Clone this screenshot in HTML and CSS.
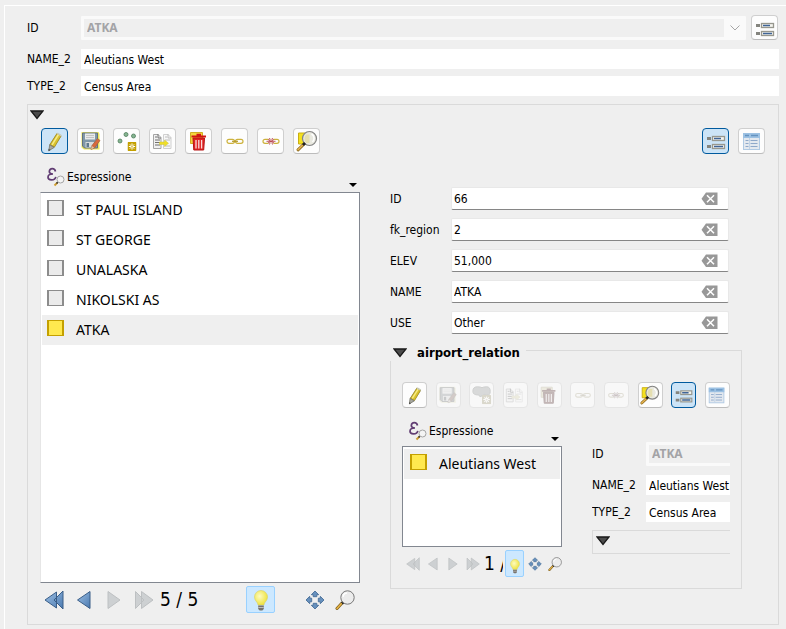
FILE: index.html
```html
<!DOCTYPE html>
<html lang="it">
<head>
<meta charset="utf-8">
<title>Aleutians West</title>
<link rel="stylesheet" href="styles.css">
</head>
<body>
<svg class="defs" aria-hidden="true">
  <defs>
    <linearGradient id="blue" x1="0" y1="0" x2="1" y2="1"><stop offset="0" stop-color="#9dc0e4"/><stop offset="1" stop-color="#4a79b0"/></linearGradient>
    <radialGradient id="glow" cx=".4" cy=".4" r=".7"><stop offset="0" stop-color="#fdfbc0"/><stop offset="1" stop-color="#ecdf2c"/></radialGradient>
  </defs>
  <symbol id="edit" viewBox="0 0 24 24">
    <path d="M5.500 22l1-6.500L14 4l4.600 2.800-7.500 12z" fill="#8d8d80"/>
    <path d="M7 15.500L14 4.500l4 2.500-6.500 11z" fill="#d9c22f" stroke="#a08a1c" stroke-width=".7"/>
    <path d="M9 15.800L15.500 5.500" stroke="#f7ec86" stroke-width="1.500"/>
    <path d="M13.700 4.800l1-1.300 4 2.400-.8 1.500z" fill="#c9cbb9"/>
    <path d="M6.600 15.800l4.600 2.600-5.300 3.200z" fill="#a9a9a0" stroke="#6f6f68" stroke-width=".6"/>
    <path d="M5.500 19.800v2.400l2.200-1.300z" fill="#4c4c48"/>
  </symbol>
  <symbol id="save" viewBox="0 0 24 24">
    <path d="M2.500 3h17l1 2v15.500H5l-2.500-2z" fill="#efe75c"/>
    <path d="M3.500 4h15v15H5.500l-2-2z" fill="#8098a8" stroke="#62727e"/>
    <path d="M6 4.500h10v6H6z" fill="#e9eaea"/>
    <path d="M7 6.500h8M7 8.500h8" stroke="#c2c4c4"/>
    <path d="M6.500 13h8.500v5.500H6.500z" fill="#d9dcdc"/><path d="M7.500 14H10v4H7.500z" fill="#5f7a8d"/>
    <path d="M12 20.500l1-4 5.500-7 2.500 2-5.500 7.500z" fill="#d9683c" stroke="#9a6242" stroke-width=".7"/>
    <path d="M12 20.500l.9-3.500 2.400 1.700z" fill="#dcc4a0"/>
  </symbol>
  <symbol id="star" viewBox="0 0 10 10">
    <rect width="10" height="10" rx="1" fill="#c4a000"/>
    <path d="M5 1.500v7M1.500 5h7M2.600 2.600l4.800 4.800M7.400 2.600L2.600 7.400" stroke="#fff" stroke-width="1.100"/>
    <circle cx="5" cy="5" r="1" fill="#d8be50"/>
  </symbol>
  <symbol id="points" viewBox="0 0 24 24">
    <g fill="#86b592" stroke="#4f7c5b" stroke-width=".8"><circle cx="5" cy="12" r="2"/><circle cx="11" cy="5.500" r="2"/><circle cx="18.500" cy="7" r="2"/></g>
    <use href="#star" x="12.500" y="13" width="9" height="9"/>
  </symbol>
  <symbol id="polygon" viewBox="0 0 24 24">
    <path d="M2 8q0-5 5-5 3 0 5 1 2-1 5-1 4 0 4 5t-4 4q-3-2-5 1-2 2-4-1-6 0-6-4z" fill="#8fa79b" stroke="#748279"/>
    <use href="#star" x="12" y="12" width="10" height="10"/>
  </symbol>
  <symbol id="copy" viewBox="0 0 24 24">
    <path d="M2.500 5.500h4.500l3 3v11h-7.500z" fill="#f1f1f1" stroke="#a5a5a5"/>
    <path d="M7 5v4h3M4 8h2M4 11h5M4 13.500h5M4 16h5" stroke="#707070" fill="none"/>
    <path d="M12.500 5.500h4.500l3 3v11h-7.500z" fill="#f8f8f8" stroke="#d0d0d0"/>
    <path d="M17 5v4h3M14 8h2M14 11h5M14 17h5" stroke="#bcbcbc" fill="none"/>
    <path d="M8.500 13h5v-2l4 3.300-4 3.200v-2h-5z" fill="#f0df25" stroke="#cdc23c" stroke-width=".5"/>
  </symbol>
  <symbol id="trash" viewBox="0 0 24 24">
    <path d="M3.500 3.500h12v11h-12z" fill="#f4d53c" stroke="#d0ad24"/>
    <path d="M6 9h11.500l-.8 12H6.800z" fill="#df2424" stroke="#b81212"/>
    <path d="M4.500 6.500h14.500v2H4.500zM9.500 4.800h4.500v2H9.500z" fill="#d11414"/>
    <path d="M9 11v8.500M11.800 11v8.500M14.600 11v8.500" stroke="#fadada" stroke-width="1.300"/>
  </symbol>
  <symbol id="link" viewBox="0 0 24 24">
    <g fill="none" stroke="#cdb23c" stroke-width="1.200"><rect x="4" y="10.300" width="7.500" height="4" rx="2"/><rect x="12.500" y="10.300" width="7.500" height="4" rx="2"/><path d="M9 12.300h6" stroke="#b3982a"/></g>
  </symbol>
  <symbol id="unlink" viewBox="0 0 24 24">
    <g fill="none" stroke="#cdb23c" stroke-width="1.200"><path d="M9.500 10.300H6a2 2 0 000 4h3.500M14.500 10.300H18a2 2 0 010 4h-3.500"/></g>
    <path d="M10.500 9l.7 2M13.500 9l-.7 2M10.500 15.500l.7-2M13.500 15.500l-.7-2M7.500 12.300h9M9 10.500l6 3.500M15 10.500L9 14" stroke="#b8444c" stroke-width=".9"/>
  </symbol>
  <symbol id="zoomsel" viewBox="0 0 24 24">
    <path d="M3.500 4h10v11h-10z" fill="#f4e11c" stroke="#c9ae14"/>
    <circle cx="14.500" cy="9.500" r="7" fill="#e9e9e0" stroke="#838383" stroke-width="1.200"/>
    <path d="M11 5.500h3.500v8.500H11q-3-4 0-8.500z" fill="#e5dfb0"/>
    <path d="M16.500 5a5 5 0 011 8" stroke="#fff" fill="none" stroke-width="1.500"/>
    <path d="M8 16l-5 4.800" stroke="#8d6a20" stroke-width="3" stroke-linecap="round"/>
    <path d="M7.500 16.300L3 20.700" stroke="#e6b450" stroke-width="1.600" stroke-linecap="round"/>
    <path d="M10 14l-2 2" stroke="#222" stroke-width="2.800"/>
  </symbol>
  <symbol id="form" viewBox="0 0 24 24">
    <path d="M3 8h4v3H3zM3 16h4v3H3z" fill="#85857f"/>
    <g fill="#f4f4ef" stroke="#97978e" stroke-width="1.300"><rect x="8.500" y="7.500" width="12" height="4"/><rect x="8.500" y="15.500" width="12" height="4"/></g>
    <path d="M10 9.500h7M10 17.500h9" stroke="#3f6497" stroke-width="1.500"/>
  </symbol>
  <symbol id="table" viewBox="0 0 24 24">
    <rect x="3.500" y="4.500" width="16" height="16" fill="#e4e9ef" stroke="#b0cae4"/>
    <path d="M3 4h17v5H3z" fill="#9cc1e3"/><path d="M5 6.500h4M11 6.500h7" stroke="#6493c0" stroke-width="1.300"/>
    <path d="M5.500 11.500h3M10.500 11.500h7M5.500 14.500h3M10.500 14.500h7M5.500 17.500h3M10.500 17.500h7" stroke="#8fa9ca"/>
    <path d="M9.500 9v11" stroke="#c2d4e6"/>
  </symbol>
  <symbol id="first" viewBox="0 0 20 20"><path d="M19 1v18l-9-9zM12.500 2v16L1 10z" stroke-linejoin="round"/></symbol>
  <symbol id="prev" viewBox="0 0 20 20"><path d="M16 1.500v17L3.500 10z" stroke-linejoin="round"/></symbol>
  <symbol id="next" viewBox="0 0 20 20"><path d="M4 1.500v17L16 10z" stroke-linejoin="round"/></symbol>
  <symbol id="last" viewBox="0 0 20 20"><path d="M1.500 1.500v17L10 10zM7.500 1.500v17L19 10z" stroke-linejoin="round"/></symbol>
  <symbol id="bulb" viewBox="0 0 20 24">
    <path d="M10 2.500a6.500 6.500 0 00-6.500 6.500c0 4 3.500 5 3.500 8h6c0-3 3.500-4 3.500-8A6.500 6.500 0 0010 2.500z" fill="url(#glow)" stroke="#d8cf64" stroke-width=".6"/>
    <path d="M7.200 17.500h5.600v3.500l-1.500 1.500H8.700L7.200 21z" fill="#77736b"/><path d="M7.200 19.500h5.600" stroke="#bbb"/>
  </symbol>
  <symbol id="pan" viewBox="0 0 20 20">
    <path d="M10 1l3.700 3.700h-1.900v2H8.200v-2H6.300zM10 19l3.700-3.700h-1.900v-2H8.200v2H6.300zM1 10l3.700-3.700v1.900h2v3.600h-2v1.900zM19 10l-3.700-3.700v1.900h-2v3.600h2v1.900z" fill="#6690bd" stroke="#4a6f98" stroke-width=".9" stroke-linejoin="round"/>
  </symbol>
  <symbol id="lens" viewBox="0 0 20 20">
    <path d="M7 13l-5 5.500" stroke="#7b5d1c" stroke-width="3" stroke-linecap="round"/><path d="M6.500 13.500l-4.500 5" stroke="#e8b445" stroke-width="1.600" stroke-linecap="round"/>
    <path d="M9 11.500l-2 2" stroke="#222" stroke-width="2.600"/>
    <circle cx="12.500" cy="7.500" r="6.700" fill="#ececec" stroke="#777"/>
    <path d="M8 7a4.500 4.500 0 014-4" fill="none" stroke="#fff" stroke-width="1.300"/>
  </symbol>
  <symbol id="expr" viewBox="0 0 20 20">
    <path d="M10.500 4.500Q10 1.700 7.300 1.700T4.300 4.500Q4.300 7 8 7 3 7 3 10.200 3 12.800 6.500 12.800 10.300 12.800 10.800 9.800" fill="none" stroke="#613d73" stroke-width="1.700"/>
    <path d="M12.500 15.500l-3 3" stroke="#cf9d31" stroke-width="2"/><path d="M13 15l-1.500 1.500" stroke="#333" stroke-width="1.600"/>
    <circle cx="15.500" cy="12.500" r="3.500" fill="#f4f4f4" stroke="#a5a5a5"/>
  </symbol>
  <symbol id="clear" viewBox="0 0 17 14">
    <path d="M5 .5h11.500v12.500H5L.5 6.800z" fill="#989898"/><path d="M6 3.200l7 7M13 3.200l-7 7" stroke="#fff" stroke-width="1.500"/>
  </symbol>
  <symbol id="fold" viewBox="0 0 14 10"><path d="M1 1h12L7 8.500z" fill="#4b4b4b" stroke="#191919" stroke-width="1.300"/></symbol>
  <symbol id="drop" viewBox="0 0 8 4"><path d="M0 0h8L4 4z"/></symbol>
  <symbol id="chevron" viewBox="0 0 10 6"><path d="M.5.500L5 5 9.500.500" fill="none" stroke="#a6a6a6"/></symbol>
</svg>

<main class="panel">
  <div class="row row-combo">
    <label for="region-id">ID</label>
    <div class="combo"><select id="region-id" disabled><option>ATKA</option></select><svg><use href="#chevron"/></svg></div>
    <button class="tool" aria-label="Form"><svg><use href="#form"/></svg></button>
  </div>
  <div class="row"><label for="region-name">NAME_2</label><input class="plain" id="region-name" value="Aleutians West"></div>
  <div class="row"><label for="region-type">TYPE_2</label><input class="plain" id="region-type" value="Census Area"></div>

  <section class="group">
    <button class="fold" aria-label="Collapse"><svg><use href="#fold"/></svg></button>
    <div class="toolbar">
      <button class="tool active" aria-label="Edit"><svg><use href="#edit"/></svg></button>
      <button class="tool" aria-label="Save"><svg><use href="#save"/></svg></button>
      <button class="tool" aria-label="Add point"><svg><use href="#points"/></svg></button>
      <button class="tool" aria-label="Duplicate"><svg><use href="#copy"/></svg></button>
      <button class="tool" aria-label="Delete"><svg><use href="#trash"/></svg></button>
      <button class="tool" aria-label="Link"><svg><use href="#link"/></svg></button>
      <button class="tool" aria-label="Unlink"><svg><use href="#unlink"/></svg></button>
      <button class="tool" aria-label="Zoom to selection"><svg><use href="#zoomsel"/></svg></button>
      <button class="tool active push" aria-label="Form view"><svg><use href="#form"/></svg></button>
      <button class="tool" aria-label="Table view"><svg><use href="#table"/></svg></button>
    </div>

    <div class="split">
      <div class="browser">
        <button class="filter"><svg class="expr"><use href="#expr"/></svg><span>Espressione</span><svg class="drop"><use href="#drop"/></svg></button>
        <ul class="list">
          <li><i></i>ST PAUL ISLAND</li>
          <li><i></i>ST GEORGE</li>
          <li><i></i>UNALASKA</li>
          <li><i></i>NIKOLSKI AS</li>
          <li class="current"><i></i>ATKA</li>
        </ul>
        <div class="nav">
          <button class="step" aria-label="First"><svg><use href="#first"/></svg></button>
          <button class="step" aria-label="Previous"><svg><use href="#prev"/></svg></button>
          <button class="step" disabled aria-label="Next"><svg><use href="#next"/></svg></button>
          <button class="step" disabled aria-label="Last"><svg><use href="#last"/></svg></button>
          <span class="count">5 / 5</span>
          <button class="bulb" aria-label="Highlight"><svg><use href="#bulb"/></svg></button>
          <button class="step" aria-label="Pan"><svg><use href="#pan"/></svg></button>
          <button class="step" aria-label="Zoom"><svg><use href="#lens"/></svg></button>
        </div>
      </div>

      <div class="detail">
        <div class="fields">
          <div class="row"><label for="a-id">ID</label><div class="field"><input id="a-id" value="66"><button aria-label="Clear"><svg><use href="#clear"/></svg></button></div></div>
          <div class="row"><label for="a-fk">fk_region</label><div class="field"><input id="a-fk" value="2"><button aria-label="Clear"><svg><use href="#clear"/></svg></button></div></div>
          <div class="row"><label for="a-elev">ELEV</label><div class="field"><input id="a-elev" value="51,000"><button aria-label="Clear"><svg><use href="#clear"/></svg></button></div></div>
          <div class="row"><label for="a-name">NAME</label><div class="field"><input id="a-name" value="ATKA"><button aria-label="Clear"><svg><use href="#clear"/></svg></button></div></div>
          <div class="row"><label for="a-use">USE</label><div class="field"><input id="a-use" value="Other"><button aria-label="Clear"><svg><use href="#clear"/></svg></button></div></div>
        </div>

        <section class="relation">
          <header><button class="fold" aria-label="Collapse"><svg><use href="#fold"/></svg></button><h2>airport_relation</h2><span class="rule"></span></header>
          <div class="relation-body">
            <div class="toolbar">
              <button class="tool" aria-label="Edit"><svg><use href="#edit"/></svg></button>
              <button class="tool" disabled aria-label="Save"><svg><use href="#save"/></svg></button>
              <button class="tool" disabled aria-label="Add polygon"><svg><use href="#polygon"/></svg></button>
              <button class="tool" disabled aria-label="Duplicate"><svg><use href="#copy"/></svg></button>
              <button class="tool" disabled aria-label="Delete"><svg><use href="#trash"/></svg></button>
              <button class="tool" disabled aria-label="Link"><svg><use href="#link"/></svg></button>
              <button class="tool" disabled aria-label="Unlink"><svg><use href="#unlink"/></svg></button>
              <button class="tool" aria-label="Zoom to selection"><svg><use href="#zoomsel"/></svg></button>
              <button class="tool active" aria-label="Form view"><svg><use href="#form"/></svg></button>
              <button class="tool" aria-label="Table view"><svg><use href="#table"/></svg></button>
            </div>
            <div class="split">
              <div class="browser">
                <button class="filter"><svg class="expr"><use href="#expr"/></svg><span>Espressione</span><svg class="drop"><use href="#drop"/></svg></button>
                <ul class="list"><li class="current"><i></i>Aleutians West</li></ul>
                <div class="nav">
                  <button class="step" disabled aria-label="First"><svg><use href="#first"/></svg></button>
                  <button class="step" disabled aria-label="Previous"><svg><use href="#prev"/></svg></button>
                  <button class="step" disabled aria-label="Next"><svg><use href="#next"/></svg></button>
                  <button class="step" disabled aria-label="Last"><svg><use href="#last"/></svg></button>
                  <span class="count">1 /</span>
                  <button class="bulb" aria-label="Highlight"><svg><use href="#bulb"/></svg></button>
                  <button class="step" aria-label="Pan"><svg><use href="#pan"/></svg></button>
                  <button class="step" aria-label="Zoom"><svg><use href="#lens"/></svg></button>
                </div>
              </div>
              <div class="clip">
                <div class="nested">
                  <div class="row row-combo"><label for="r-id">ID</label><div class="combo"><select id="r-id" disabled><option>ATKA</option></select></div></div>
                  <div class="row"><label for="r-name">NAME_2</label><input class="plain" id="r-name" value="Aleutians West"></div>
                  <div class="row"><label for="r-type">TYPE_2</label><input class="plain" id="r-type" value="Census Area"></div>
                  <div class="folded"><button class="fold" aria-label="Expand"><svg><use href="#fold"/></svg></button></div>
                </div>
              </div>
            </div>
          </div>
        </section>
      </div>
    </div>
  </section>
</main>
</body>
</html>
```

FILE: styles.css
```css
* { box-sizing: border-box; }

body {
  margin: 0;
  min-height: 100vh;
  padding: 5px 0 0 4px;
  display: flex;
  background: #efefef;
  color: #000;
  font: 12px/16px "DejaVu Sans Condensed", "Noto Sans", sans-serif;
}

.defs { position: absolute; width: 0; height: 0; }

button, input, select { font: inherit; color: inherit; margin: 0; padding: 0; }
button { border: 0; background: none; }
svg { display: block; flex: none; }

.panel {
  flex: 1;
  min-width: 0;
  display: flex;
  flex-direction: column;
  gap: 7px;
  padding: 9px 7px 4px 22px;
  border: solid #fff;
  border-width: 1px 0 0 1px;
}

/* Form rows */
.row { display: flex; align-items: center; }
.row label { flex: none; width: 54px; }
.row-combo { height: 25px; margin-bottom: 2px; }
.plain {
  flex: 1;
  min-width: 0;
  height: 20px;
  padding: 1px 3px 0;
  border: 0;
  background: #fff;
}

.combo { position: relative; flex: 1; min-width: 0; }
.combo select {
  display: block;
  width: 100%;
  height: 24px;
  padding: 0 3px;
  appearance: none;
  border: 3px solid #fafafa;
  border-right-width: 22px;
  border-radius: 1px;
  background: #efefef;
  color: #a3a3a6;
  font: bold 12px/18px "Noto Sans", sans-serif;
  opacity: 1;
}
.combo svg {
  position: absolute;
  right: 6px;
  top: 9px;
  width: 10px;
  height: 6px;
  pointer-events: none;
}

/* Tool buttons */
.tool {
  flex: none;
  display: flex;
  align-items: center;
  justify-content: center;
  width: 27px;
  height: 26px;
  border: 1px solid #cfcfcf;
  border-bottom-color: #bcbcbc;
  border-radius: 4px;
  background: #fdfdfd;
}
.tool svg { width: 24px; height: 24px; }
.tool.active { border-color: #005a9e; background: #cce4f7; }
.tool:disabled { border-color: #e5e5e5; background: #f8f8f8; }
.tool:disabled svg { filter: grayscale(.8); opacity: .35; }
.row-combo > .tool { height: 25px; margin: 0 1px 0 5px; }

.toolbar { display: flex; gap: 9px; }
.toolbar .push { margin-left: auto; }

.fold { display: block; }
.fold svg { width: 14px; height: 10px; }

/* Relation group */
.group {
  flex: 1;
  display: flex;
  flex-direction: column;
  margin-top: 1px;
  padding: 5px 12px 11px;
  border: 1px solid #dadada;
}
.group > .fold { margin-left: -10px; width: 14px; height: 18px; padding-bottom: 8px; }
.group > .toolbar { padding: 0 1px; }
.group > .split { flex: 1; margin-right: 24px; }

.split {
  display: grid;
  grid-template-columns: minmax(0, 320fr) minmax(0, 352fr);
  column-gap: 30px;
}

.browser { display: flex; flex-direction: column; }
.filter {
  display: flex;
  align-items: center;
  gap: 2px;
  height: 20px;
  margin: 13px 0 5px;
  padding: 0 4px 0 5px;
}
.filter .expr { width: 20px; height: 20px; }
.filter .drop { width: 8px; height: 4px; margin: 0 -1px 0 auto; align-self: flex-end; }

.list {
  flex: 1;
  margin: 0;
  padding: 2px 1px;
  list-style: none;
  border: 1px solid #828790;
  border-left-color: #e6e6e6;
  background: #fff;
  font: 14px/30px "Noto Sans", sans-serif;
}
.list li { display: flex; gap: 12px; height: 30px; padding-left: 5px; white-space: nowrap; }
.list i {
  flex: none;
  width: 17px;
  height: 16px;
  margin-top: 5px;
  border: 2px solid #8c8c8c;
  border-width: 1px 2px;
  background: #ebebeb;
}
.list .current { background: #efefef; }
.list .current i { border-color: #c4a000; background: #ffe94f; }

/* Record navigation */
.nav { display: flex; align-items: center; gap: 10px; height: 27px; margin-top: 3px; padding: 0 5px 0 4px; }
.step svg { width: 20px; height: 20px; fill: url(#blue); stroke: #3a5e88; stroke-width: 1; }
.step:disabled svg { fill: #cdd0d2; stroke: #bdc0c2; }
.count { flex: 1; margin-left: -4px; overflow: hidden; white-space: nowrap; font-size: 19px; line-height: 27px; }
.bulb {
  display: flex;
  justify-content: center;
  width: 29px;
  height: 27px;
  margin-right: 20px;
  border: 1px solid #99d1ff;
  border-radius: 2px;
  background: #cce8ff;
}
.bulb svg { width: 20px; height: 24px; margin-top: 1px; }

/* Airport form */
.detail { padding-top: 33px; }
.fields { display: grid; gap: 8px; padding-right: 13px; }
.fields label { width: 61px; }
.field {
  flex: 1;
  min-width: 0;
  display: flex;
  align-items: center;
  height: 23px;
  padding: 0 10px 0 2px;
  border: 1px solid #e8e8e8;
  border-bottom-color: #868686;
  border-radius: 2px;
  background: #fff;
}
.field input { flex: 1; min-width: 0; height: 20px; padding-top: 1px; border: 0; background: none; }
.field svg { width: 17px; height: 14px; }

.relation { margin-top: 11px; }
.relation header { display: flex; align-items: center; height: 16px; }
.relation header .fold { margin: 0 10px 0 3px; }
.relation h2 { margin: 0; font: bold 13px/16px "DejaVu Sans Condensed", "Noto Sans", sans-serif; }
.rule {
  flex: 1;
  align-self: flex-end;
  height: 11px;
  margin-left: 6px;
  border: solid #dadada;
  border-width: 1px 1px 0 0;
}
.relation-body { padding: 21px 11px 11px; border: 1px solid #dadada; border-top: 0; }
.relation-body .toolbar { gap: 0; justify-content: space-between; }
.relation-body .tool { width: 25px; }
.relation-body .tool svg { width: 22px; height: 22px; }
.relation-body .split { grid-template-columns: minmax(0, 160fr) minmax(0, 138fr); }
.relation-body .list { flex: none; min-height: 101px; border-color: #828790; }
.relation-body .list li { padding-left: 6px; }

.relation-body .nav { gap: 6px; padding: 0 0 0 4px; }
.relation-body .step svg { width: 14px; height: 14px; }
.relation-body .count { margin-left: -2px; }
.relation-body .bulb { flex: none; width: 19px; margin: 0 -2px 0 -4px; }
.relation-body .bulb svg { width: 14px; height: 18px; margin-top: 6px; }

.clip { overflow: hidden; padding-top: 33px; }
.nested { display: grid; gap: 7px; width: 220px; }
.folded { height: 24px; margin-top: 1px; padding: 5px 3px; border: 1px solid #dadada; }
```
